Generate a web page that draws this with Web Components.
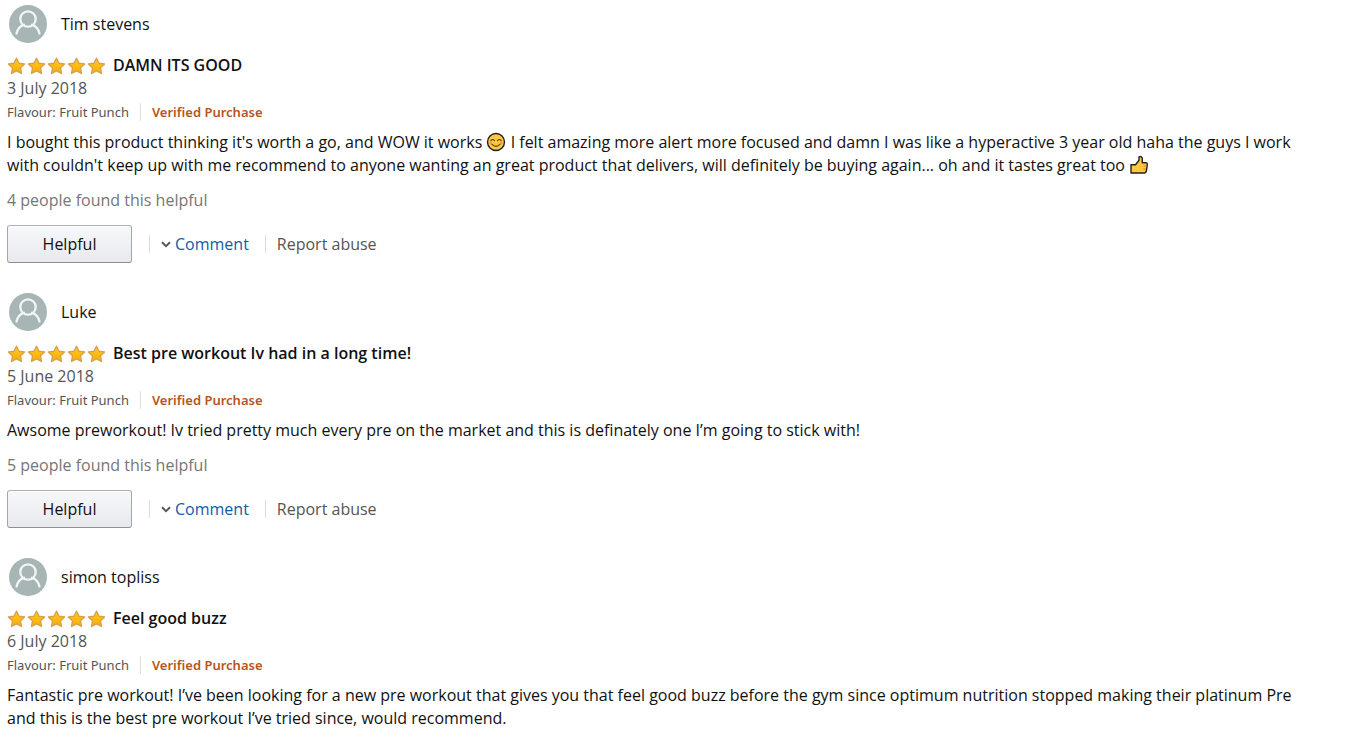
<!DOCTYPE html>
<html lang="en-GB">
<head>
<meta charset="utf-8">
<title>Customer reviews</title>
<style>
body{margin:0;background:#fff;color:#111;font:16px/23px "Open Sans","Noto Sans",sans-serif}
</style>
</head>
<body>
<review-list>
  <customer-review author="Tim stevens" heading="DAMN ITS GOOD" date="3 July 2018" helpful="4">I bought this product thinking it's worth a go, and WOW it works <emoji-icon name="smile"></emoji-icon> I felt amazing more alert more focused and damn I was like a hyperactive 3 year old haha the guys I work <wbr>with couldn't keep up with me recommend to anyone wanting an great product that delivers, will definitely be buying again... oh and it tastes great too <emoji-icon name="thumb"></emoji-icon></customer-review>
  <customer-review author="Luke" heading="Best pre workout Iv had in a long time!" date="5 June 2018" helpful="5">Awsome preworkout! Iv tried pretty much every pre on the market and this is definately one I’m going to stick with!</customer-review>
  <customer-review author="simon topliss" heading="Feel good buzz" date="6 July 2018">Fantastic pre workout! I’ve been looking for a new pre workout that gives you that feel good buzz before the gym since optimum nutrition stopped making their platinum Pre and this is the best pre workout I’ve tried since, would recommend.</customer-review>
</review-list>

<template id="review-template">
<style>
:host{display:block}
h3,p{margin:0;font-size:inherit}
.heading{display:flex;align-items:center;gap:8px;margin-top:11px}
.heading h3{font-weight:600}
.date{color:#555}
.meta{display:flex;align-items:center;gap:11px;height:24px;font:13px/23px "Noto Sans",sans-serif;color:#555}
.meta strong{color:#b8541c;font-weight:600}
.rule{width:1px;height:18px;background:#ddd}
.body{margin-top:7px}
.count{margin-top:12px;color:#767676}
</style>
<user-profile></user-profile>
<div class="heading"><star-rating></star-rating><h3></h3></div>
<p class="date"></p>
<div class="meta"><span>Flavour: Fruit Punch</span><span class="rule"></span><strong>Verified Purchase</strong></div>
<p class="body"><slot></slot></p>
</template>

<script>
const define = (tag, html) => customElements.define(tag, class extends HTMLElement {
  constructor() {
    super();
    this.attachShadow({ mode: 'open' }).innerHTML = html;
  }
});

define('review-list', `<style>
:host{display:flex;flex-direction:column;gap:30px;padding:5px 72px 4px 7px}
</style><slot></slot>`);

define('user-profile', `<style>
:host{display:flex;align-items:center;gap:14px;padding-left:2px}
svg{display:block;width:38px;height:38px}
</style>
<svg viewBox="0 0 38 38" aria-hidden="true"><circle cx="19" cy="19" r="19" fill="#a8b5b5"/><g fill="none" stroke="#f1f5f5" stroke-width="2.3" stroke-linecap="round"><circle cx="19" cy="14" r="7.7"/><path d="M7.500 28.500c1-4.500 3.500-7.500 7.500-8.700M30.500 28.500c-1-4.500-3.500-7.500-7.500-8.700"/></g></svg>
<slot></slot>`);

const star = x => `<path transform="translate(${x} 0)" d="M9.500 1.200 12 6.200 17.600 6.900 13.500 10.800 14.500 16.500 9.500 13.900 4.500 16.500 5.500 10.800 1.400 6.900 7 6.200Z"/>`;
define('star-rating', `<style>
:host{display:block}
svg{display:block;width:98px;height:18px}
</style>
<svg viewBox="0 0 98 18" role="img" aria-label="5 out of 5 stars"><defs><linearGradient id="g" x2="0" y2="1"><stop stop-color="#ffce20"/><stop offset="1" stop-color="#ffaa00"/></linearGradient></defs><g fill="url(#g)" stroke="#d6a052" stroke-width="1.400" stroke-linejoin="round">${[0, 20, 40, 60, 80].map(star).join('')}</g></svg>`);

define('review-actions', `<style>
:host{display:flex;align-items:center;margin-top:13px}
button{width:125px;height:38px;padding:0;border:1px solid;border-color:#adb1b8 #a2a6ac #8d9096;border-radius:3px;background:linear-gradient(#f7f8fa,#e7e9ec);box-shadow:inset 0 1px 0 #fff9;color:#111;font:inherit}
.item{display:flex;align-items:center;margin-left:17px}
.item::before{content:"";width:1px;height:18px;margin-right:11px;background:#ddd}
.item + .item{margin-left:16px}
a{color:#555;text-decoration:none}
a.comment{display:flex;align-items:center;gap:4px;color:#0f5ba8}
svg{width:10px;height:7px}
</style>
<button type="button">Helpful</button>
<span class="item"><a class="comment" href="#comment"><svg viewBox="0 0 10 7" aria-hidden="true"><path d="M1 1.300 5 5.200 9 1.300" fill="none" stroke="#555" stroke-width="1.900"/></svg>Comment</a></span>
<span class="item"><a href="#report">Report abuse</a></span>`);

const emoji = {
  smile: `<circle cx="10" cy="10" r="8.500" fill="#ffc83d" stroke="#222" stroke-width="1.400"/><path d="M4.900 8.700q1.800-2.400 3.600 0M11.500 8.700q1.800-2.400 3.600 0M5.800 12.200q4.200 4.200 8.400 0" fill="none" stroke="#5c431c" stroke-width="1.200" stroke-linecap="round"/><path d="M3.500 11h2M14.500 11h2" stroke="#f58a55" stroke-width="1.500"/>`,
  thumb: `<path d="M2 9.800h4.500l3.500-4.500V1.800q3-.9 3.300 1.700v4.300h3.700q1.500.2 1.300 1.800l-1 6.700q-.5 1.700-2 1.700H2Z" fill="#ffc83d" stroke="#222" stroke-width="1.400" stroke-linejoin="round"/><path d="M14.500 11h3M14.200 14h2.800" fill="none" stroke="#c98b18"/>`
};
customElements.define('emoji-icon', class extends HTMLElement {
  constructor() {
    super();
    this.attachShadow({ mode: 'open' }).innerHTML = `<style>
:host{display:inline-block;width:20px;height:20px;vertical-align:-4px}
svg{display:block}
</style><svg width="20" height="20" viewBox="0 0 20 20" aria-hidden="true">${emoji[this.getAttribute('name')]}</svg>`;
  }
});

customElements.define('customer-review', class extends HTMLElement {
  constructor() {
    super();
    const root = this.attachShadow({ mode: 'open' });
    root.append(document.getElementById('review-template').content.cloneNode(true));
    root.querySelector('user-profile').textContent = this.getAttribute('author');
    root.querySelector('h3').textContent = this.getAttribute('heading');
    root.querySelector('.date').textContent = this.getAttribute('date');
    const helpful = this.getAttribute('helpful');
    if (helpful) {
      const count = document.createElement('p');
      count.className = 'count';
      count.textContent = `${helpful} people found this helpful`;
      root.append(count, document.createElement('review-actions'));
    }
  }
});
</script>
</body>
</html>
